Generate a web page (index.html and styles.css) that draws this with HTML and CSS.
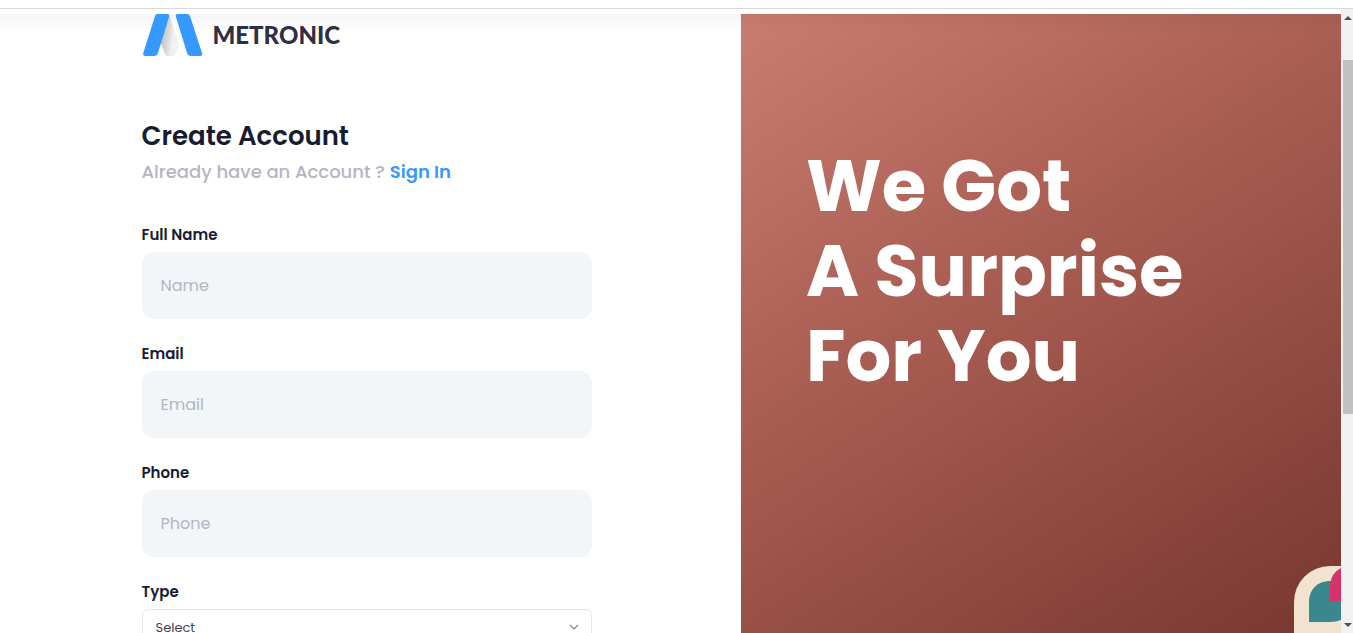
FILE: index.html
```html
<!DOCTYPE html>
<html lang="en">
<head>
  <meta charset="utf-8">
  <meta name="viewport" content="width=device-width, initial-scale=1">
  <title>Metronic | Create Account</title>
  <link rel="stylesheet" href="styles.css">
</head>
<body>
  <div class="topline"></div>
  <div class="viewport">
    <div class="page">
      <main class="content">
        <div class="panel">
          <a class="brand" href="#">
            <svg class="brand-mark" viewBox="0 0 60 42" aria-hidden="true">
              <defs>
                <linearGradient id="fold" x1="0" y1="0" x2="1" y2="0.3">
                  <stop offset="0.2" stop-color="#bdbdc0"/>
                  <stop offset="0.8" stop-color="#f1f1f2"/>
                </linearGradient>
              </defs>
              <path fill="url(#fold)" d="M26 0 36 31 33 39Q32 42 29 42H25Q23 42 22 40L17 27Z"/>
              <path fill="#3699ff" d="M14 0H24Q27 0 26 3L15 39Q14 42 11 42H2Q-.5 42 .3 39L12 2Q13 0 14 0Z"/>
              <path fill="#3699ff" d="M35 0H44Q46 0 47 2L59 39Q60 42 57 42H48Q45 42 44 39L33 3Q32 0 35 0Z"/>
            </svg>
            <span class="brand-name">METRONIC</span>
          </a>
          <form class="signup">
            <h1 class="title">Create Account</h1>
            <p class="subtitle">Already have an Account ? <a class="link" href="#">Sign In</a></p>
            <div class="field">
              <label class="label" for="name">Full Name</label>
              <input class="input" id="name" type="text" placeholder="Name">
            </div>
            <div class="field">
              <label class="label" for="email">Email</label>
              <input class="input" id="email" type="email" placeholder="Email">
            </div>
            <div class="field">
              <label class="label" for="phone">Phone</label>
              <input class="input" id="phone" type="tel" placeholder="Phone">
            </div>
            <div class="field">
              <label class="label" for="type">Type</label>
              <div class="select-wrap">
                <select class="select" id="type"><option>Select</option></select>
                <svg class="chevron" viewBox="0 0 10 6" aria-hidden="true"><path d="M1 1l4 4 4-4" fill="none" stroke="#7e8299" stroke-width="1.2"/></svg>
              </div>
            </div>
          </form>
        </div>
      </main>
      <aside class="promo">
        <h2 class="promo-title">We Got<br>A Surprise<br>For You</h2>
        <svg class="art" viewBox="0 0 47 67" aria-hidden="true">
          <path fill="#f2e3d0" d="M0 67V36A36 36 0 0 1 36 0H47V67Z"/>
          <path fill="#38888d" d="M15 56V35A20 20 0 0 1 35 15H47V54Q42 56 36 56Z"/>
          <path fill="#d6336c" d="M36 35V19Q37 7 47 2V35Z"/>
        </svg>
      </aside>
    </div>
    <div class="scrollbar" aria-hidden="true">
      <span class="arrow arrow-up"></span>
      <span class="thumb"></span>
      <span class="arrow arrow-down"></span>
    </div>
  </div>
</body>
</html>
```
FILE: styles.css
```css
* { box-sizing: border-box; }

body {
  margin: 0;
  height: 100vh;
  display: flex;
  flex-direction: column;
  overflow: hidden;
  background: #fff;
  color: #181c32;
  font-family: Poppins, Inter, "Open Sans", sans-serif;
}

.topline {
  flex: none;
  height: 9px;
  border-bottom: 1px solid #d8d8d8;
}

.viewport {
  flex: 1;
  min-height: 0;
  display: flex;
}

.page {
  flex: 1;
  min-width: 0;
  display: flex;
  padding-top: 5px;
}

.content {
  flex: 1;
  min-width: 0;
  padding-right: 8px;
  background: linear-gradient(#f5f5f5, #fff 18px);
  overflow: hidden;
}

.panel {
  width: 100%;
  max-width: 450px;
  margin: 0 auto;
}

.brand {
  display: flex;
  align-items: center;
  gap: 10px;
  height: 42px;
  padding-left: 1px;
  color: #2f2e43;
  text-decoration: none;
}

.brand-mark {
  width: 60px;
  height: 42px;
}

.brand-name {
  font: 900 24px/42px Lato, sans-serif;
}

.signup { padding-top: 64px; }

.title {
  margin: 0;
  font-size: 26px;
  font-weight: 600;
  line-height: 32px;
}

.subtitle {
  margin: 6px 0 37px;
  color: #b5b5c3;
  font-size: 18px;
  font-weight: 500;
  line-height: 28px;
}

.link {
  color: #3699ff;
  font-weight: 600;
  text-decoration: none;
}

.field { margin-bottom: 23px; }

.label {
  display: block;
  margin-bottom: 5px;
  font-size: 15px;
  font-weight: 600;
  line-height: 24px;
}

.input {
  display: block;
  width: 100%;
  height: 67px;
  padding: 0 19px;
  border: 0;
  border-radius: 12px;
  background: #f3f6f9;
  color: #3f4254;
  font-family: inherit;
  font-size: 16px;
}

.input::placeholder {
  color: #b5b5c3;
  opacity: 1;
}

.select-wrap {
  display: grid;
  align-items: center;
}

.select,
.chevron { grid-area: 1 / 1; }

.select {
  appearance: none;
  width: 100%;
  height: 36px;
  padding: 0 13px;
  border: 1px solid #e4e6ef;
  border-radius: 6px;
  background: #fff;
  color: #3f4254;
  font-family: inherit;
  font-size: 13px;
}

.chevron {
  justify-self: end;
  width: 10px;
  height: 6px;
  margin-right: 13px;
  pointer-events: none;
}

.promo {
  position: relative;
  flex: none;
  width: 600px;
  max-width: 50%;
  padding: 129px 65px 0;
  background:
    linear-gradient(rgba(0, 0, 0, 0.04), transparent 18px),
    linear-gradient(147deg, #cb7c70, #a65b50 45%, #773730);
}

.promo-title {
  margin: 0;
  color: #fff;
  font-size: 72px;
  font-weight: 700;
  line-height: 85px;
}

.art {
  position: absolute;
  right: 0;
  bottom: 0;
  width: 47px;
  height: 67px;
}

.scrollbar {
  flex: none;
  display: flex;
  flex-direction: column;
  width: 12px;
  padding: 7px 0 6px 2px;
  background: #f1f1f1;
}

.arrow {
  align-self: center;
  border: 4px solid transparent;
}

.arrow-up {
  border-top: 0;
  border-bottom-color: #505050;
}

.arrow-down {
  margin-top: auto;
  border-bottom: 0;
  border-top-color: #505050;
}

.thumb {
  height: 58%;
  margin-top: 40px;
  background: #c1c1c1;
}
```
